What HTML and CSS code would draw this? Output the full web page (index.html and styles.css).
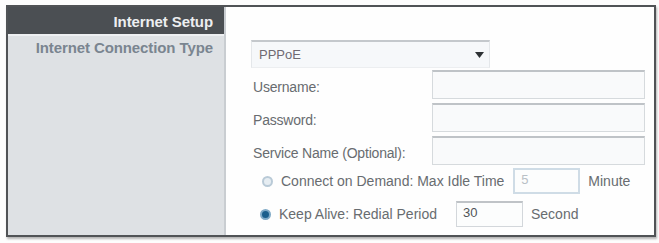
FILE: index.html
```html
<!DOCTYPE html>
<html>
<head>
<meta charset="utf-8">
<link rel="stylesheet" href="styles.css">
</head>
<body>
<div class="frame">
  <div class="side">
    <div class="side-head">Internet Setup</div>
    <div class="side-title">Internet Connection Type</div>
  </div>
  <div class="main">
    <div class="select">
      <span class="select-text">PPPoE</span>
      <svg class="caret" width="9" height="6" viewBox="0 0 9 6"><path d="M0 0H9L4.5 6Z" fill="#2e3235"/></svg>
    </div>
    <div class="fields">
      <div class="label">Username:</div>
      <div class="input"></div>
      <div class="label">Password:</div>
      <div class="input"></div>
      <div class="label">Service Name (Optional):</div>
      <div class="input"></div>
    </div>
    <div class="radio-row first">
      <span class="radio off"></span>
      <span class="rtext">Connect on Demand: Max Idle Time</span>
      <span class="small-input disabled">5</span>
      <span class="unit">Minute</span>
    </div>
    <div class="radio-row second">
      <span class="radio on"></span>
      <span class="rtext">Keep Alive: Redial Period</span>
      <span class="small-input">30</span>
      <span class="unit">Second</span>
    </div>
  </div>
</div>
</body>
</html>
```
FILE: styles.css
```css
* { box-sizing: border-box; }
html, body { margin: 0; padding: 0; background: #fdfdfd; }
body {
  font-family: "Liberation Sans", Arial, sans-serif;
  width: 659px;
  height: 243px;
  overflow: hidden;
}
.frame {
  margin: 5px 0 0 6px;
  width: 650px;
  height: 232px;
  border: 2px solid #505356;
  box-shadow: 1px 2px 2px rgba(90, 90, 90, 0.45);
  display: grid;
  grid-template-columns: 218px 1fr;
  background: #fefefe;
}
.side {
  background: #dee1e4;
  border-right: 2px solid #c9cdd1;
}
.side-head {
  height: 29px;
  background: #4b4f53;
  color: #eceef0;
  font-weight: bold;
  font-size: 15px;
  text-align: right;
  padding: 6px 11px 0 0;
  border-bottom: 2px solid #eef0f2;
  letter-spacing: -0.1px;
}
.side-title {
  color: #7a8590;
  font-weight: bold;
  font-size: 15px;
  text-align: right;
  padding: 3px 11px 0 0;
  letter-spacing: -0.1px;
}
.main {
  padding: 33px 9px 0 25px;
  color: #686c70;
  font-size: 14px;
}
.select {
  width: 239px;
  height: 28px;
  background: #f6f8fa;
  border-top: 2px solid #c4c8cc;
  border-left: 1px solid #e4e7ea;
  border-right: 1px solid #e4e7ea;
  border-bottom: 1px solid #eceef0;
  display: flex;
  align-items: center;
  justify-content: space-between;
  padding: 0 5px 0 7px;
}
.select-text { color: #6f6a72; font-size: 13px; }
.caret { display: block; }
.fields {
  display: grid;
  grid-template-columns: 181px 213px;
  grid-auto-rows: 29px;
  row-gap: 4px;
  margin-top: 2px;
  align-items: center;
}
.label { padding-left: 2px; padding-top: 4px; letter-spacing: -0.2px; }
.input {
  height: 29px;
  background: #f9fafb;
  border: 1px solid #d6dadd;
  border-top: 2px solid #bfc3c7;
}
.radio-row {
  display: flex;
  align-items: center;
  height: 26px;
  white-space: nowrap;
}
.radio-row.first { margin-top: 3px; padding-left: 11px; }
.radio-row.second { margin-top: 7px; padding-left: 9px; }
.radio {
  width: 11px;
  height: 11px;
  border-radius: 50%;
  flex: none;
  margin-right: 8px;
}
.radio.off {
  background: #e6edf2;
  border: 2px solid #b9cad7;
}
.radio.on {
  background: #1c5f8c;
  border: 2px solid #7fa9c6;
}
.rtext { flex: none; }
.small-input {
  flex: none;
  width: 67px;
  height: 26px;
  border: 1px solid #d3d7db;
  border-top: 2px solid #bfc3c7;
  background: #fcfdfd;
  padding: 2px 0 0 6px;
  font-size: 13px;
  color: #505458;
}
.small-input.disabled {
  border: 2px solid #cfdce6;
  color: #b8c0c6;
}
.first .small-input { margin-left: 9px; }
.second .small-input { margin-left: 19px; }
.unit { margin-left: 8px; }
```
